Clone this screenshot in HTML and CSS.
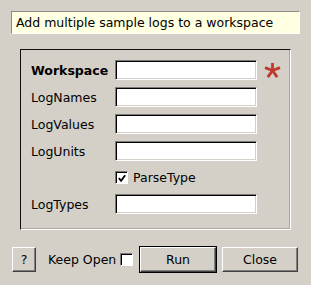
FILE: index.html
```html
<!DOCTYPE html>
<html lang="en">
<head>
    <title>AddSampleLogMultiple</title>
    <link rel="stylesheet" href="styles.css">
</head>
<body>
    <div class="desc">Add multiple sample logs to a workspace</div>
    <div class="group">
        <div class="form">
            <label class="lbl req">Workspace</label>
            <span class="field"></span>
            <span class="star">
                <svg width="17" height="15" viewBox="0 0 18 16">
                    <g stroke="#c0392b" stroke-width="3" stroke-linecap="butt">
                        <line x1="9" y1="8" x2="9" y2="0"/>
                        <line x1="9" y1="8" x2="1" y2="5"/>
                        <line x1="9" y1="8" x2="17" y2="5"/>
                        <line x1="9" y1="8" x2="4" y2="15"/>
                        <line x1="9" y1="8" x2="14" y2="15"/>
                    </g>
                </svg>
            </span>

            <label class="lbl">LogNames</label>
            <span class="field"></span>
            <span></span>

            <label class="lbl">LogValues</label>
            <span class="field"></span>
            <span></span>

            <label class="lbl">LogUnits</label>
            <span class="field"></span>
            <span></span>

            <span></span>
            <label class="check-row">
                <span class="box">
                    <svg width="11" height="11" viewBox="0 0 11 11">
                        <path d="M2 5 L4.5 8 L9 2" fill="none" stroke="#000" stroke-width="2"/>
                    </svg>
                </span>
                ParseType
            </label>
            <span></span>

            <label class="lbl">LogTypes</label>
            <span class="field"></span>
            <span></span>
        </div>
    </div>
    <div class="actions">
        <button class="btn help">?</button>
        <span class="keep">Keep Open</span>
        <span class="box small"></span>
        <span class="default"><button class="btn run">Run</button></span>
        <button class="btn close">Close</button>
    </div>
</body>
</html>
```

FILE: styles.css
```css
* {
    margin: 0;
    padding: 0;
    box-sizing: border-box;
}
body {
    background: #d4d0c8;
    color: #000;
    font-family: "DejaVu Sans", sans-serif;
    font-size: 12.5px;
    padding: 11px;
    width: 311px;
    height: 285px;
    overflow: hidden;
}
.desc {
    height: 23px;
    background: #ffffe1;
    border: 1px solid;
    border-color: #8a8a8a #fff #fff #8a8a8a;
    padding-left: 4px;
    line-height: 21px;
    margin-bottom: 15px;
}
.group {
    margin: 0 9px;
    border: 1px solid;
    border-color: #111 #fff #fff #111;
    box-shadow: inset -1px -1px 0 #aaa69e;
    padding: 10px 0 15px 10px;
}
.form {
    display: grid;
    grid-template-columns: 84px 142px 24px;
    grid-template-rows: 20px 20px 20px 20px 19px 20px;
    row-gap: 7px;
    align-items: center;
}
.lbl {
    white-space: nowrap;
}
.req {
    font-weight: bold;
}
.field {
    height: 20px;
    background: #fff;
    border: 1px solid;
    border-color: #7a7a7a #fff #fff #7a7a7a;
    box-shadow: inset 1px 1px 0 #000, inset -1px -1px 0 #d4d0c8;
}
.star {
    padding-left: 7px;
    display: flex;
    align-items: center;
    padding-top: 1px;
}
.star svg {
    display: block;
}
.check-row {
    display: flex;
    align-items: center;
    gap: 5px;
}
.box {
    width: 13px;
    height: 13px;
    background: #fff;
    border: 1px solid;
    border-color: #7a7a7a #fff #fff #7a7a7a;
    box-shadow: inset 1px 1px 0 #000;
    display: flex;
    align-items: center;
    justify-content: center;
}
.box svg {
    display: block;
    margin: 1px 0 0 1px;
}
.actions {
    display: flex;
    align-items: center;
    margin-top: 16px;
    padding-left: 1px;
}
.actions > * {
    flex: none;
}
.btn {
    font-family: "DejaVu Sans", sans-serif;
    font-size: 12.5px;
    color: #000;
    background: #d4d0c8;
    border: 1px solid;
    border-color: #fff #404040 #404040 #fff;
    box-shadow: inset -1px -1px 0 #808080;
    height: 25px;
}
.help {
    width: 24px;
}
.keep {
    margin-left: 12px;
    width: 66px;
    white-space: nowrap;
}
.small {
    width: 13px;
    height: 13px;
    margin-left: 6px;
}
.default {
    display: block;
    margin-left: 6px;
    border: 1px solid #000;
}
.run {
    display: block;
    width: 76px;
}
.close {
    width: 76px;
    margin-left: 5px;
}
```
